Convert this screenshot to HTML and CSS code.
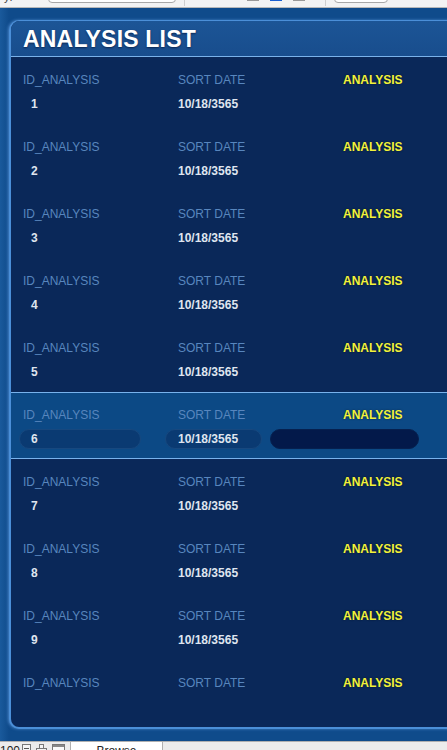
FILE: index.html
```html
<!DOCTYPE html>
<html>
<head>
<meta charset="utf-8">
<link rel="stylesheet" href="styles.css">
</head>
<body>
<div class="topbar">
  <span class="tb-text">y:</span>
  <span class="tb-field"></span>
  <span class="tb-sep sep1"></span>
  <span class="tb-icon gray"></span>
  <span class="tb-icon blue"></span>
  <span class="tb-icon gray"></span>
  <span class="tb-sep sep2"></span>
  <span class="tb-box"></span>
</div>
<div class="stage">
  <div class="panel">
    <div class="header"><h1 class="title">ANALYSIS LIST</h1></div>
    <div class="rows">
      <div class="row"><span class="lbl l1">ID_ANALYSIS</span><span class="lbl l2">SORT DATE</span><span class="lbl l3">ANALYSIS</span><span class="fld f1">1</span><span class="fld f2">10/18/3565</span><span class="fld f3"></span></div>
      <div class="row"><span class="lbl l1">ID_ANALYSIS</span><span class="lbl l2">SORT DATE</span><span class="lbl l3">ANALYSIS</span><span class="fld f1">2</span><span class="fld f2">10/18/3565</span><span class="fld f3"></span></div>
      <div class="row"><span class="lbl l1">ID_ANALYSIS</span><span class="lbl l2">SORT DATE</span><span class="lbl l3">ANALYSIS</span><span class="fld f1">3</span><span class="fld f2">10/18/3565</span><span class="fld f3"></span></div>
      <div class="row"><span class="lbl l1">ID_ANALYSIS</span><span class="lbl l2">SORT DATE</span><span class="lbl l3">ANALYSIS</span><span class="fld f1">4</span><span class="fld f2">10/18/3565</span><span class="fld f3"></span></div>
      <div class="row"><span class="lbl l1">ID_ANALYSIS</span><span class="lbl l2">SORT DATE</span><span class="lbl l3">ANALYSIS</span><span class="fld f1">5</span><span class="fld f2">10/18/3565</span><span class="fld f3"></span></div>
      <div class="row selected"><span class="lbl l1">ID_ANALYSIS</span><span class="lbl l2">SORT DATE</span><span class="lbl l3">ANALYSIS</span><span class="fld f1">6</span><span class="fld f2">10/18/3565</span><span class="fld f3"></span></div>
      <div class="row"><span class="lbl l1">ID_ANALYSIS</span><span class="lbl l2">SORT DATE</span><span class="lbl l3">ANALYSIS</span><span class="fld f1">7</span><span class="fld f2">10/18/3565</span><span class="fld f3"></span></div>
      <div class="row"><span class="lbl l1">ID_ANALYSIS</span><span class="lbl l2">SORT DATE</span><span class="lbl l3">ANALYSIS</span><span class="fld f1">8</span><span class="fld f2">10/18/3565</span><span class="fld f3"></span></div>
      <div class="row"><span class="lbl l1">ID_ANALYSIS</span><span class="lbl l2">SORT DATE</span><span class="lbl l3">ANALYSIS</span><span class="fld f1">9</span><span class="fld f2">10/18/3565</span><span class="fld f3"></span></div>
      <div class="row"><span class="lbl l1">ID_ANALYSIS</span><span class="lbl l2">SORT DATE</span><span class="lbl l3">ANALYSIS</span><span class="fld f1"></span><span class="fld f2"></span><span class="fld f3"></span></div>
    </div>
  </div>
</div>
<div class="bottombar">
  <span class="bb-num">100</span>
  <span class="bb-icon">
    <svg width="9" height="9" viewBox="0 0 9 9"><rect x="0.5" y="0.5" width="8" height="8" fill="#f4f4f4" stroke="#777"/><line x1="2" y1="4.5" x2="7" y2="4.5" stroke="#555"/></svg>
  </span>
  <span class="bb-icon">
    <svg width="11" height="9" viewBox="0 0 11 9"><rect x="3.5" y="0.5" width="4" height="4" fill="#f4f4f4" stroke="#777"/><rect x="0.5" y="4.5" width="10" height="4" fill="#f4f4f4" stroke="#777"/></svg>
  </span>
  <span class="bb-icon">
    <svg width="13" height="9" viewBox="0 0 13 9"><rect x="0.5" y="0.5" width="12" height="8" fill="#fafafa" stroke="#777"/><rect x="1" y="1" width="11" height="2" fill="#888"/></svg>
  </span>
  <span class="bb-tab">Browse</span>
</div>
</body>
</html>
```

FILE: styles.css
```css
html, body {
  margin: 0;
  padding: 0;
  height: 750px;
  overflow: hidden;
}
body {
  width: 447px;
  background: #0f4b8b;
  font-family: "Liberation Sans", Arial, Helvetica, sans-serif;
}

/* top toolbar (cut off) */
.topbar {
  height: 8px;
  box-sizing: border-box;
  background: #f3f3f3;
  border-bottom: 1px solid #b8b8b8;
  display: flex;
  align-items: flex-end;
  overflow: hidden;
}
.tb-text {
  font-size: 11px;
  line-height: 12px;
  color: #444;
  margin-left: 4px;
  margin-bottom: 4px;
  width: 40px;
  flex: none;
}
.tb-field {
  flex: none;
  width: 126px;
  height: 14px;
  margin-left: 4px;
  margin-bottom: 4px;
  background: #fff;
  border: 1px solid #a8a8a8;
  border-radius: 4px;
}
.tb-sep {
  flex: none;
  width: 1px;
  height: 8px;
  background: #cfcfcf;
  margin-bottom: 1px;
}
.sep1 { margin-left: 8px; margin-right: 62px; }
.sep2 { margin-left: 9px; margin-right: 8px; }
.tb-icon {
  flex: none;
  width: 12px;
  height: 10px;
  margin-right: 11px;
  margin-bottom: 6px;
  border-bottom: 1px solid #999;
  background: #d8d8d8;
}
.tb-icon.blue { background: #3d84f0; border-bottom-color: #1a5ed0; }
.tb-icon:last-of-type { margin-right: 0; }
.tb-box {
  flex: none;
  width: 52px;
  height: 14px;
  margin-bottom: 4px;
  background: #fff;
  border: 1px solid #a8a8a8;
  border-radius: 4px;
}

/* blue stage */
.stage {
  padding: 12px 0 12px 9px;
  background: linear-gradient(90deg, #1a5a9c 0px, #0f4b8b 9px);
}
.panel {
  margin-right: -30px;
  background: #0a2859;
  border: 2px solid #4b8fd8;
  border-right: none;
  border-top-width: 1px;
  border-radius: 10px 0 0 10px;
  box-shadow: -1px 0 3px rgba(110, 170, 240, 0.6);
  overflow: hidden;
}
.header {
  height: 36px;
  box-sizing: border-box;
  background: linear-gradient(180deg, #1c5596 0%, #184d8d 100%);
  border-bottom: 1px solid #7ab2ea;
  padding-left: 12px;
}
.title {
  margin: 0;
  font-size: 23px;
  line-height: 36px;
  font-weight: bold;
  color: #ffffff;
  letter-spacing: 0.2px;
  text-shadow: 0 1px 2px rgba(0, 10, 40, 0.6);
}

/* rows */
.row {
  height: 67px;
  box-sizing: border-box;
  padding: 16px 0 0 8px;
  display: grid;
  grid-template-columns: 146px 105px 149px;
  grid-template-rows: 14px 20px;
  row-gap: 7px;
}
.row.selected {
  background: #0c4985;
  border-top: 1px solid #78b2ec;
  border-bottom: 1px solid #78b2ec;
  padding-top: 15px;
}
.lbl {
  font-size: 12px;
  line-height: 14px;
  color: #5886be;
  white-space: nowrap;
}
.l1 { padding-left: 4px; }
.l2 { padding-left: 13px; }
.l3 {
  padding-left: 73px;
  color: #f2f23a;
  font-weight: bold;
  text-shadow: 0 0 2px rgba(0, 0, 0, 0.5);
}
.fld {
  box-sizing: border-box;
  height: 20px;
  font-size: 12px;
  line-height: 18px;
  font-weight: bold;
  color: #dfe5ef;
  border: 1px solid transparent;
  border-radius: 10px;
  white-space: nowrap;
}
.f1 { width: 122px; padding-left: 11px; }
.f2 { width: 97px; padding-left: 12px; }
.f3 { width: 149px; }
.selected .f1, .selected .f2 {
  background: #0a3a72;
  border-color: #17487f;
}
.selected .f3 {
  background: #03194a;
  border-color: #06204f;
}

/* bottom toolbar (cut off) */
.bottombar {
  height: 9px;
  box-sizing: border-box;
  background: #ececec;
  border-top: 1px solid #b0b0b0;
  display: flex;
  align-items: flex-start;
  overflow: hidden;
}
.bb-num {
  font-size: 12px;
  line-height: 12px;
  color: #222;
  margin-top: 3px;
  width: 22px;
  flex: none;
}
.bb-icon {
  flex: none;
  margin-top: 2px;
  margin-right: 5px;
  display: flex;
}
.bb-icon svg { display: block; }
.bb-tab {
  flex: none;
  width: 91px;
  margin-left: 0;
  height: 12px;
  background: #fff;
  border-left: 1px solid #b0b0b0;
  border-right: 1px solid #b0b0b0;
  text-align: center;
  font-size: 12px;
  line-height: 12px;
  padding-top: 3px;
  color: #222;
}
```
